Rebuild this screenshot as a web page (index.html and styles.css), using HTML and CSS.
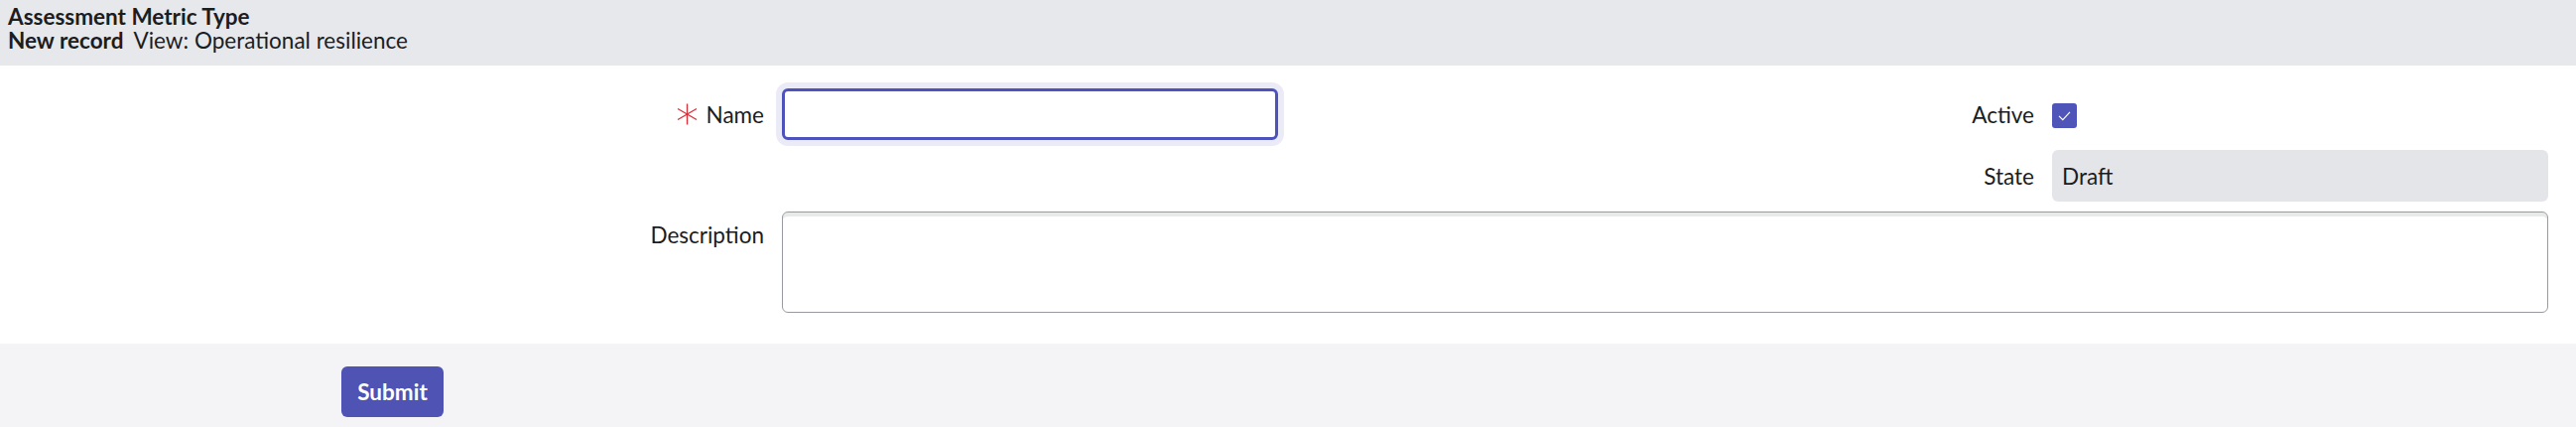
FILE: index.html
```html
<!DOCTYPE html>
<html lang="en">
<head>
<meta charset="utf-8">
<title>Assessment Metric Type</title>
<link rel="stylesheet" href="styles.css">
</head>
<body>
<header class="page-header">
  <div class="title">Assessment Metric Type</div>
  <div class="subtitle"><span class="record">New record</span><span class="view">View: Operational resilience</span></div>
</header>
<main class="form">
  <div class="label label-name">
    <svg class="req" width="21" height="22" viewBox="0 0 21 22" aria-hidden="true">
      <line x1="10.5" y1="0.5" x2="10.5" y2="21.5"/>
      <line x1="1" y1="5.5" x2="20" y2="16.5"/>
      <line x1="1" y1="16.5" x2="20" y2="5.5"/>
    </svg>
    <span>Name</span>
  </div>
  <div class="field"><input class="input focused" type="text"></div>
  <div class="label">Active</div>
  <div class="field field-check">
    <span class="checkbox">
      <svg width="25" height="25" viewBox="0 0 25 25" aria-hidden="true"><path d="M7 12.8 L10.8 16.6 L18 8.8"/></svg>
    </span>
  </div>
  <div class="empty"></div>
  <div class="empty"></div>
  <div class="label">State</div>
  <div class="field"><div class="readonly">Draft</div></div>
  <div class="label label-top">Description</div>
  <div class="field field-wide"><textarea class="textarea"></textarea></div>
</main>
<footer class="page-footer">
  <button class="submit" type="button">Submit</button>
</footer>
</body>
</html>
```
FILE: styles.css
```css
* { box-sizing: border-box; }
html, body { margin: 0; padding: 0; }
body {
  font-family: Lato, "Noto Sans", sans-serif;
  color: #1b1d21;
  background: #ffffff;
  width: 2596px;
  height: 430px;
  overflow: hidden;
}
.page-header {
  background: #e7e8ec;
  height: 66px;
  padding: 5px 8px 0;
  font-size: 22.5px;
  line-height: 23.5px;
}
.title { font-weight: 700; }
.subtitle .record { font-weight: 700; margin-right: 10px; }
.form {
  display: grid;
  grid-template-columns: 770px 500px 1fr 500px;
  grid-template-rows: 52px 52px 102px;
  column-gap: 18px;
  row-gap: 10px;
  padding: 23px 28px 31px 0;
  font-size: 22.5px;
}
.label {
  display: flex;
  align-items: center;
  justify-content: flex-end;
  height: 52px;
}
.label-top { height: 47px; }
.label-name { gap: 9px; }
.req { stroke: #d8323c; stroke-width: 1.4; fill: none; margin-top: -1px; }
.field { display: flex; align-items: stretch; }
.field-check { align-items: center; }
.field-wide { grid-column: 2 / 5; }
.input {
  width: 100%;
  height: 52px;
  border: 3px solid #4d53bb;
  border-radius: 6px;
  box-shadow: 0 0 0 6px #ebebf7;
  outline: none;
  font: inherit;
  padding: 0 10px;
}
.checkbox {
  width: 25px;
  height: 25px;
  border-radius: 3px;
  background: #4f54b8;
  display: block;
  margin-top: 2px;
}
.checkbox svg { display: block; fill: none; stroke: #ffffff; stroke-width: 1.2; }
.readonly {
  width: 100%;
  background: #e4e5e9;
  border-radius: 6px;
  display: flex;
  align-items: center;
  padding: 0 10px;
}
.textarea {
  width: 100%;
  height: 102px;
  border: 1px solid #979ba1;
  border-radius: 6px;
  box-shadow: inset 0 5px 0 -1px #e8eaea;
  resize: none;
  font: inherit;
  outline: none;
  background: #ffffff;
}
.page-footer {
  background: #f4f4f6;
  height: 84px;
  padding: 23px 0 0 344px;
}
.submit {
  width: 103px;
  height: 51px;
  background: #4f53b4;
  color: #ffffff;
  border: none;
  border-radius: 6px;
  font-family: Lato, "Noto Sans", sans-serif;
  font-weight: 700;
  font-size: 22.5px;
  padding: 0;
}
```
